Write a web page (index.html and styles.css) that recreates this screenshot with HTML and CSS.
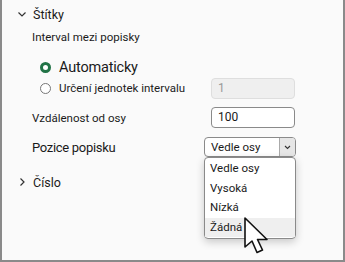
FILE: index.html
```html
<!DOCTYPE html>
<html lang="cs">
<head>
<meta charset="utf-8">
<link rel="stylesheet" href="styles.css">
</head>
<body>
<div class="pane">
  <div class="section-head">
    <svg class="chev" width="10" height="10" viewBox="0 0 10 10"><path d="M1.5 3.5 L5 7 L8.5 3.5" fill="none" stroke="#333" stroke-width="1.2"/></svg>
    <span class="head-text">Štítky</span>
  </div>
  <div class="label-sm interval">Interval mezi popisky</div>
  <div class="radio-row auto">
    <span class="radio on"></span>
    <span class="label-lg">Automaticky</span>
  </div>
  <div class="radio-row unit">
    <span class="radio"></span>
    <span class="label-sm">Určení jednotek intervalu</span>
    <span class="input disabled">1</span>
  </div>
  <div class="field-row dist">
    <span class="label-sm">Vzdálenost od osy</span>
    <span class="input">100</span>
  </div>
  <div class="field-row pos">
    <span class="label-md">Pozice popisku</span>
    <div class="select-wrap">
      <div class="select">
        <span class="select-text">Vedle osy</span>
        <span class="select-btn"><svg width="7" height="5" viewBox="0 0 7 5"><path d="M1 1 L3.5 3.5 L6 1" fill="none" stroke="#333" stroke-width="1.1"/></svg></span>
      </div>
      <ul class="menu">
        <li>Vedle osy</li>
        <li>Vysoká</li>
        <li>Nízká</li>
        <li class="hover">Žádná</li>
      </ul>
      <svg class="cursor" width="28" height="40" viewBox="0 0 28 40"><path d="M2 2 L2 31 L9 25 L14 36.5 L19.5 34 L14.5 23.5 L24 23.5 Z" fill="#fff" stroke="#111" stroke-width="1.6" stroke-linejoin="round"/></svg>
    </div>
  </div>
  <div class="section-head closed">
    <svg class="chev" width="10" height="10" viewBox="0 0 10 10"><path d="M3.5 1.5 L7 5 L3.5 8.5" fill="none" stroke="#333" stroke-width="1.2"/></svg>
    <span class="head-text">Číslo</span>
  </div>
</div>
</body>
</html>
```
FILE: styles.css
```css
html, body {
  margin: 0;
  padding: 0;
}
body {
  width: 345px;
  height: 262px;
  overflow: hidden;
  font-family: Roboto, "Noto Sans", sans-serif;
  color: #1a1a1a;
}
.pane {
  box-sizing: border-box;
  width: 345px;
  height: 262px;
  background: #fafafa;
  border-left: 2px solid #8a8a8a;
  border-right: 2px solid #8a8a8a;
  border-bottom: 2px solid #8a8a8a;
  padding: 4px 0 0 15px;
}
.section-head {
  display: flex;
  align-items: center;
  height: 20px;
}
.chev { margin-right: 6px; }
.head-text { font-size: 12.5px; }
.label-sm { font-size: 11.5px; }
.label-md { font-size: 13px; letter-spacing: -0.3px; }
.label-lg { font-size: 14.5px; letter-spacing: -0.2px; }
.interval {
  margin: 6px 0 0 15px;
  height: 18px;
}
.radio-row {
  display: flex;
  align-items: center;
  padding-left: 23px;
}
.auto { margin-top: 9px; height: 20px; }
.unit { margin-top: 1px; height: 20px; }
.radio {
  box-sizing: border-box;
  width: 11px;
  height: 11px;
  border-radius: 50%;
  border: 1px solid #777;
  background: #fff;
  margin-right: 8px;
}
.radio.on {
  border: 3px solid #217346;
}
.input {
  box-sizing: border-box;
  margin-left: auto;
  margin-right: 48px;
  width: 84px;
  height: 21px;
  border: 1px solid #8a8a8a;
  border-radius: 4px;
  background: #fff;
  font-size: 12px;
  padding: 2px 6px;
}
.input.disabled {
  background: #efefef;
  border-color: #dedede;
  color: #999;
}
.field-row {
  display: flex;
  align-items: center;
  padding-left: 15px;
}
.dist { margin-top: 9px; height: 21px; }
.pos { margin-top: 9px; height: 20px; align-items: flex-start; }
.pos .label-md { margin-top: 3px; }
.select-wrap {
  position: relative;
  margin-left: auto;
  margin-right: 47px;
  width: 92px;
  height: 20px;
}
.select {
  box-sizing: border-box;
  display: flex;
  align-items: center;
  height: 20px;
  border: 1px solid #8a8a8a;
  border-radius: 4px;
  background: #fff;
  padding-left: 6px;
  font-size: 11.5px;
}
.select-text { flex: 1; }
.select-btn {
  box-sizing: border-box;
  width: 16px;
  height: 18px;
  background: #e6e6e6;
  border-left: 1px solid #aaa;
  border-radius: 0 3px 3px 0;
  display: flex;
  align-items: center;
  justify-content: center;
}
.menu {
  position: absolute;
  left: 0;
  top: 20px;
  box-sizing: border-box;
  width: 92px;
  margin: 0;
  padding: 1px 0;
  list-style: none;
  background: #fff;
  border: 1px solid #8a8a8a;
  border-radius: 4px;
  box-shadow: 0 3px 8px rgba(0,0,0,0.2);
  font-size: 11.5px;
}
.menu li {
  height: 19.5px;
  line-height: 19px;
  padding-left: 5px;
}
.menu li.hover { background: #efefef; }
.cursor {
  position: absolute;
  left: 39px;
  top: 79px;
}
.section-head.closed {
  margin-top: 15px;
}
```
